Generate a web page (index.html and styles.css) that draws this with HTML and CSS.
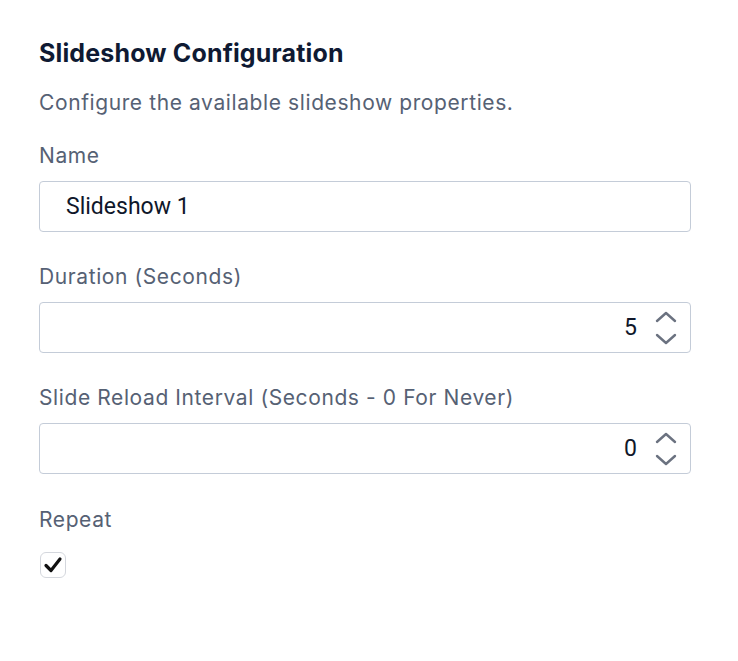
FILE: index.html
```html
<!DOCTYPE html>
<html lang="en">
<head>
<meta charset="utf-8">
<title>Slideshow Configuration</title>
<link rel="stylesheet" href="styles.css">
</head>
<body>
<main class="panel">
  <h1 class="title">Slideshow Configuration</h1>
  <p class="desc">Configure the available slideshow properties.</p>

  <div class="field">
    <label class="label" for="name">Name</label>
    <div class="box">
      <input id="name" class="text-input" type="text" value="Slideshow 1">
    </div>
  </div>

  <div class="field">
    <label class="label" for="duration">Duration (Seconds)</label>
    <div class="box">
      <input id="duration" class="num-input" type="text" value="5">
      <svg class="spin" width="24" height="40" viewBox="0 0 24 40" aria-hidden="true">
        <path d="M3 13 L12 5 L21 13" fill="none" stroke="#6b7280" stroke-width="2.4" stroke-linecap="round" stroke-linejoin="round"/>
        <path d="M3 27 L12 35 L21 27" fill="none" stroke="#6b7280" stroke-width="2.4" stroke-linecap="round" stroke-linejoin="round"/>
      </svg>
    </div>
  </div>

  <div class="field">
    <label class="label" for="reload">Slide Reload Interval (Seconds - 0 For Never)</label>
    <div class="box">
      <input id="reload" class="num-input" type="text" value="0">
      <svg class="spin" width="24" height="40" viewBox="0 0 24 40" aria-hidden="true">
        <path d="M3 13 L12 5 L21 13" fill="none" stroke="#6b7280" stroke-width="2.4" stroke-linecap="round" stroke-linejoin="round"/>
        <path d="M3 27 L12 35 L21 27" fill="none" stroke="#6b7280" stroke-width="2.4" stroke-linecap="round" stroke-linejoin="round"/>
      </svg>
    </div>
  </div>

  <div class="field field-check">
    <span class="label">Repeat</span>
    <span class="check" role="checkbox" aria-checked="true">
      <svg width="20" height="20" viewBox="0 0 20 20" aria-hidden="true">
        <path d="M3 10.5 L8 15.5 L17 4" fill="none" stroke="#111111" stroke-width="3.2" stroke-linecap="round" stroke-linejoin="round"/>
      </svg>
    </span>
  </div>
</main>
</body>
</html>
```

FILE: styles.css
```css
* { box-sizing: border-box; }

html, body {
  margin: 0;
  padding: 0;
  background: #ffffff;
}

body {
  font-family: Inter, "Noto Sans", "Liberation Sans", sans-serif;
  color: #0f172a;
}

.panel {
  padding: 37px 47px 0 39px;
  display: flex;
  flex-direction: column;
}

.title {
  margin: 0;
  font-size: 25px;
  line-height: 32px;
  font-weight: 700;
  letter-spacing: 0.15px;
  color: #0f1a33;
}

.desc {
  margin: 19px 0 0;
  font-size: 21px;
  line-height: 30px;
  letter-spacing: 0.6px;
  color: #566174;
}

.field {
  display: flex;
  flex-direction: column;
  gap: 10px;
  margin-top: 30px;
}

.desc + .field { margin-top: 23px; }

.label {
  font-size: 21px;
  line-height: 30px;
  letter-spacing: 0.6px;
  color: #566174;
}

.box {
  height: 51px;
  border: 1px solid #c4ccd8;
  border-radius: 4px;
  display: flex;
  align-items: center;
  background: #fff;
}

.text-input,
.num-input {
  flex: 1;
  min-width: 0;
  border: 0;
  outline: none;
  background: transparent;
  font-family: Roboto, "Liberation Sans", sans-serif;
  font-size: 23px;
  color: #0f172a;
  padding: 0;
}

.text-input { padding-left: 26px; }

.num-input {
  text-align: right;
  padding-right: 17px;
}

.spin {
  flex: none;
  margin-right: 12px;
}

.field-check { gap: 17px; margin-top: 31px; }

.check {
  width: 26px;
  height: 26px;
  margin-left: 1px;
  border: 1px solid #d4d7dd;
  border-radius: 6px;
  display: flex;
  align-items: center;
  justify-content: center;
  background: #fff;
}
```
